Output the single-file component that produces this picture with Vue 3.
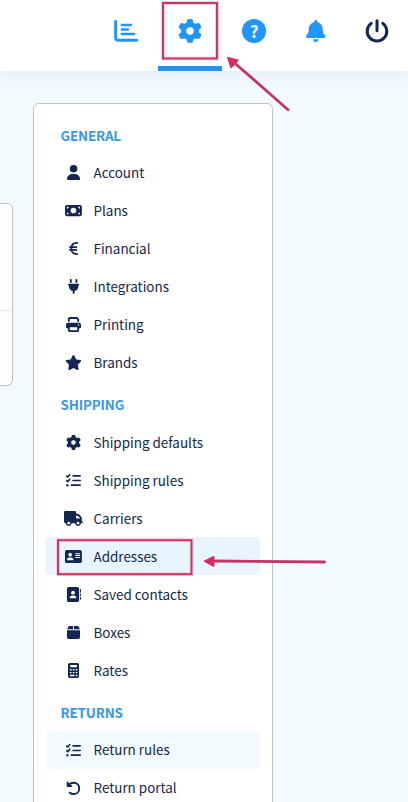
<script setup>
const gear =
  'M495.9 166.6c3.2 8.7 .5 18.4-6.4 24.6l-43.3 39.4c1.1 8.3 1.7 16.8 1.7 25.4s-.6 17.1-1.7 25.4l43.3 39.4c6.9 6.2 9.6 15.9 6.4 24.6c-4.4 11.9-9.7 23.3-15.8 34.3l-4.7 8.1c-6.6 11-14 21.4-22.1 31.2c-5.9 7.2-15.7 9.6-24.5 6.8l-55.7-17.7c-13.4 10.3-28.2 18.9-44 25.4l-12.5 57.1c-2 9.1-9 16.3-18.2 17.8c-13.8 2.3-28 3.5-42.5 3.5s-28.7-1.2-42.5-3.5c-9.2-1.5-16.2-8.7-18.2-17.8l-12.5-57.1c-15.8-6.5-30.6-15.1-44-25.4L83.1 425.9c-8.8 2.8-18.6 .3-24.5-6.8c-8.1-9.8-15.5-20.2-22.1-31.2l-4.7-8.1c-6.1-11-11.4-22.4-15.8-34.3c-3.2-8.7-.5-18.4 6.4-24.6l43.3-39.4C64.6 273.1 64 264.6 64 256s.6-17.1 1.7-25.4L22.4 191.2c-6.9-6.2-9.6-15.9-6.4-24.6c4.4-11.9 9.7-23.3 15.8-34.3l4.7-8.1c6.6-11 14-21.4 22.1-31.2c5.9-7.2 15.7-9.6 24.5-6.8l55.7 17.7c13.4-10.3 28.2-18.9 44-25.4l12.5-57.1c2-9.1 9-16.3 18.2-17.8C227.3 1.2 241.5 0 256 0s28.7 1.2 42.5 3.5c9.2 1.5 16.2 8.7 18.2 17.8l12.5 57.1c15.8 6.5 30.6 15.1 44 25.4l55.7-17.7c8.8-2.8 18.6-.3 24.5 6.8c8.1 9.8 15.5 20.2 22.1 31.2l4.7 8.1c6.1 11 11.4 22.4 15.8 34.3zM256 336a80 80 0 1 0 0-160 80 80 0 1 0 0 160z'

// w: view box width (height is always 512); f: filled path; s: stroked path; sw: stroke width
const icons = {
  gear: { w: 512, f: gear },
  user: { w: 448, f: 'M224 256A128 128 0 1 0 224 0a128 128 0 1 0 0 256zm-45.7 48C79.8 304 0 383.8 0 482.3C0 498.7 13.3 512 29.7 512H418.3c16.4 0 29.7-13.3 29.7-29.7C448 383.8 368.2 304 269.7 304H178.3z' },
  money: { w: 576, f: 'M64 64C28.7 64 0 92.7 0 128V384c0 35.3 28.7 64 64 64H512c35.3 0 64-28.7 64-64V128c0-35.3-28.7-64-64-64H64zm64 320H64V320c35.3 0 64 28.7 64 64zM64 192V128h64c0 35.3-28.7 64-64 64zM448 384c0-35.3 28.7-64 64-64v64H448zm64-192c-35.3 0-64-28.7-64-64h64v64zM288 160a96 96 0 1 1 0 192 96 96 0 1 1 0-192z' },
  euro: { w: 320, f: '', s: 'M292 66H264C150 66 82 145 82 256S150 446 264 446H292M32 208H252M32 304H252', sw: 62 },
  plug: { w: 384, f: 'M96 0C78.300 0 64 14.300 64 32v96h64V32c0-17.700-14.300-32-32-32zM288 0c-17.700 0-32 14.300-32 32v96h64V32c0-17.700-14.300-32-32-32zM32 160c-17.700 0-32 14.300-32 32s14.300 32 32 32v32c0 77.400 55 142 128 156.800V480c0 17.700 14.300 32 32 32s32-14.300 32-32V412.800C297 398 352 333.400 352 256V224c17.700 0 32-14.300 32-32s-14.300-32-32-32H32z' },
  print: { w: 512, f: 'M128 0C92.700 0 64 28.700 64 64v96h64V64H354.700L384 93.300V160h64V93.300c0-17-6.700-33.300-18.700-45.300L400 18.700C388 6.700 371.700 0 354.700 0H128zM384 352v96H128V352H384zm64 32h32c17.700 0 32-14.300 32-32V256c0-35.300-28.700-64-64-64H64c-35.300 0-64 28.700-64 64v96c0 17.700 14.300 32 32 32H64v64c0 35.300 28.700 64 64 64H384c35.300 0 64-28.700 64-64V384zM432 248a24 24 0 1 1 0 48 24 24 0 1 1 0-48z' },
  star: { w: 576, f: 'M316.900 18C311.600 7 300.400 0 288.100 0s-23.400 7-28.800 18L195 150.300 51.400 171.500c-12 1.800-22 10.200-25.700 21.700s-.7 24.200 7.900 32.700L137.800 329 113.200 474.700c-2 12 3 24.200 12.900 31.300s23 8 33.800 2.300l128.300-68.500 128.300 68.500c10.800 5.700 23.900 4.900 33.800-2.300s14.900-19.300 12.900-31.300L438.500 329 542.700 225.900c8.600-8.500 11.700-21.200 7.900-32.700s-13.700-19.900-25.700-21.700L381.200 150.300 316.900 18z' },
  rules: { w: 512, f: 'M6 416a42 42 0 1 0 84 0a42 42 0 1 0-84 0z', s: 'M24 104L56 138 124 58M24 264L56 298 124 218M240 96H484M240 256H484M184 416H484', sw: 56 },
  truck: { w: 640, f: 'M48 0C21.500 0 0 21.500 0 48V368c0 26.500 21.500 48 48 48H64c0 53 43 96 96 96s96-43 96-96H384c0 53 43 96 96 96s96-43 96-96h32c17.700 0 32-14.300 32-32s-14.300-32-32-32V237.300c0-17-6.700-33.300-18.700-45.300L512 114.700c-12-12-28.300-18.700-45.300-18.700H416V48c0-26.500-21.500-48-48-48H48zM416 160h50.700L544 237.300V256H416V160zM112 416a48 48 0 1 1 96 0 48 48 0 1 1 -96 0zm368-48a48 48 0 1 1 0 96 48 48 0 1 1 0-96z' },
  card: { w: 576, f: 'M64 32C28.700 32 0 60.700 0 96V416c0 35.300 28.700 64 64 64H512c35.300 0 64-28.700 64-64V96c0-35.300-28.700-64-64-64H64zm80 256h64c44.200 0 80 35.800 80 80c0 8.800-7.200 16-16 16H80c-8.800 0-16-7.200-16-16c0-44.200 35.800-80 80-80zm-32-96a64 64 0 1 1 128 0 64 64 0 1 1-128 0zM352 144H512V176H352zM352 208H512V240H352zM352 272H512V304H352z' },
  contacts: { w: 512, f: 'M96 0C60.700 0 32 28.700 32 64V448c0 35.300 28.700 64 64 64H384c35.300 0 64-28.700 64-64V64c0-35.300-28.700-64-64-64H96zM208 288h64c44.200 0 80 35.800 80 80c0 8.800-7.200 16-16 16H144c-8.800 0-16-7.200-16-16c0-44.200 35.800-80 80-80zm-32-96a64 64 0 1 1 128 0 64 64 0 1 1-128 0zM480 64h16a16 16 0 0 1 16 16v96a16 16 0 0 1-16 16h-16zM480 224h16a16 16 0 0 1 16 16v48a16 16 0 0 1-16 16h-16zM480 336h16a16 16 0 0 1 16 16v64a16 16 0 0 1-16 16h-16z' },
  box: { w: 448, f: 'M90 32C72 32 55 42 47 59L5 144H208V32H90zM240 32V144H443L401 59C393 42 376 32 358 32H240zM0 176V416C0 451 29 480 64 480H384C419 480 448 451 448 416V176H0z' },
  calc: { w: 384, f: 'M64 0C28.700 0 0 28.700 0 64V448c0 35.300 28.700 64 64 64H320c35.300 0 64-28.700 64-64V64c0-35.300-28.700-64-64-64H64zM80 64H304V144H80zM64 208H120V256H64zM164 208H220V256H164zM264 208H320V256H264zM64 304H120V352H64zM164 304H220V352H164zM264 304H320V352H264zM64 400H220V448H64zM264 400H320V448H264z' },
  undo: { w: 512, f: '', s: 'M58 54V176H184M66 172C110 94 190 62 262 62C374 62 450 145 450 252S374 446 262 446C210 446 164 430 130 400', sw: 66 }
}

const groups = [
  { title: 'General', items: [['user', 'Account'], ['money', 'Plans'], ['euro', 'Financial'], ['plug', 'Integrations'], ['print', 'Printing'], ['star', 'Brands']] },
  { title: 'Shipping', items: [['gear', 'Shipping defaults'], ['rules', 'Shipping rules'], ['truck', 'Carriers'], ['card', 'Addresses', 'active'], ['contacts', 'Saved contacts'], ['box', 'Boxes'], ['calc', 'Rates']] },
  { title: 'Returns', items: [['rules', 'Return rules', 'hover'], ['undo', 'Return portal']] }
]
</script>

<template>
  <div class="page">
    <header class="topbar">
      <a class="tab">
        <svg width="26" height="26" viewBox="0 0 26 26" fill="none" stroke="currentColor" stroke-linecap="round" stroke-linejoin="round">
          <path d="M2.600 3.500V19.700Q2.600 22.200 5.100 22.200H23.800" stroke-width="2.900" />
          <path d="M8.900 7H17.800M8.900 11.500H14.800M8.900 16H20.900" stroke-width="2.600" />
        </svg>
      </a>
      <a class="tab current">
        <svg width="24" height="24" viewBox="0 0 512 512" fill="currentColor"><path :d="gear" /></svg>
      </a>
      <a class="tab">
        <span class="help">?</span>
      </a>
      <a class="tab bell">
        <svg width="19.500" height="22" viewBox="0 0 448 512" fill="currentColor" preserveAspectRatio="none">
          <path d="M224 0c-17.700 0-32 14.300-32 32V51.200C119 66 64 130.600 64 208v18.800c0 47-17.300 92.400-48.500 127.600l-7.400 8.300c-8.400 9.400-10.400 22.900-5.300 34.400S19.400 416 32 416H416c12.600 0 24-7.400 29.200-18.900s3.100-25-5.300-34.400l-7.400-8.300C401.300 319.200 384 273.900 384 226.800V208c0-77.400-55-142-128-156.800V32c0-17.700-14.300-32-32-32zm45.300 493.300c12-12 18.700-28.300 18.700-45.300H160c0 17 6.700 33.300 18.700 45.300s28.300 18.700 45.300 18.700s33.300-6.700 45.300-18.700z" />
        </svg>
      </a>
      <a class="tab power">
        <svg width="24" height="24" viewBox="0 0 24 24" fill="none" stroke="currentColor" stroke-width="3" stroke-linecap="round">
          <path d="M12 1.700V11.700M6.200 4.400A9.800 9.800 0 1 0 17.800 4.400" />
        </svg>
      </a>
    </header>

    <main class="content">
      <section class="panel"><div class="panel-top"></div></section>

      <nav class="menu">
        <section v-for="g in groups" :key="g.title" class="group">
          <h2>{{ g.title }}</h2>
          <a v-for="[icon, label, state] in g.items" :key="label" class="item" :class="state">
            <span class="icon">
              <svg :viewBox="`0 0 ${icons[icon].w} 512`" height="15" :width="icons[icon].w * 15 / 512">
                <path v-if="icons[icon].f" :d="icons[icon].f" fill="currentColor" fill-rule="evenodd" />
                <path v-if="icons[icon].s" :d="icons[icon].s" fill="none" stroke="currentColor" :stroke-width="icons[icon].sw" stroke-linecap="round" stroke-linejoin="round" />
              </svg>
            </span>
            <span>{{ label }}</span>
          </a>
        </section>
      </nav>
    </main>

    <svg class="marks" width="408" height="802" viewBox="0 0 408 802" fill="none">
      <g stroke="#f8cfdd" stroke-width="4">
        <rect x="163" y="3" width="54" height="55.500" />
        <rect x="58" y="540.200" width="133.500" height="34" />
      </g>
      <g stroke="#c33865" stroke-width="2">
        <rect x="163" y="3" width="54" height="55.500" />
        <rect x="58" y="540.200" width="133.500" height="34" />
      </g>
      <g stroke="#c53465" stroke-width="2.800" stroke-linecap="round">
        <path d="M288 109.700L234 62.500" />
        <path d="M324.500 562L212 561" />
      </g>
      <path d="M227.800 57.800L238 60.200L231.200 67.500Z" fill="#d92a64" stroke="#d92a64" stroke-width="1.500" stroke-linejoin="round" />
      <path d="M204.500 561.200L213.700 556.700V566Z" fill="#d92a64" stroke="#d92a64" stroke-width="1.500" stroke-linejoin="round" />
    </svg>
  </div>
</template>

<style>
body {
  margin: 0;
  overflow: hidden;
}
</style>

<style scoped>
.page {
  position: relative;
  height: 802px;
  overflow: hidden;
  background: #f3fafd;
  color: #122651;
  font-family: "Noto Sans CJK SC", "Noto Sans", sans-serif;
  display: flex;
  flex-direction: column;
}
.topbar {
  flex: none;
  height: 71px;
  display: flex;
  justify-content: flex-end;
  background: #fff;
  box-shadow: 0 2px 14px #dfe9f7;
  color: #2095fa;
}
.tab {
  width: 64px;
  box-sizing: border-box;
  display: flex;
  align-items: center;
  justify-content: center;
  padding-bottom: 4px;
  border-bottom: 5px solid transparent;
}
.current {
  border-color: #2492ef;
}
.bell {
  width: 60px;
}
.power {
  width: 62px;
  color: #122651;
}
.help {
  width: 24px;
  height: 24px;
  border-radius: 50%;
  background: #2095fa;
  color: #fff;
  font-size: 17px;
  font-weight: 700;
  line-height: 23px;
  text-align: center;
}
.content {
  display: flex;
  align-items: flex-start;
  gap: 20px;
  padding-top: 32px;
}
.panel {
  box-sizing: border-box;
  width: 13px;
  height: 183px;
  margin-top: 100px;
  background: #fff;
  border: 1px solid #bfc2ca;
  border-left: 0;
  border-radius: 0 6px 6px 0;
}
.panel-top {
  height: 106px;
  border-bottom: 1px solid #e8e5ee;
}
.menu {
  box-sizing: border-box;
  width: 240px;
  height: 730px;
  padding: 8px 12px;
  background: #fff;
  border: 1px solid #bfc2ca;
  border-radius: 6px;
}
.group h2 {
  margin: 0;
  height: 42px;
  box-sizing: border-box;
  padding: 3px 0 0 14.500px;
  font-size: 13.400px;
  letter-spacing: -0.15px;
  line-height: 40px;
  font-weight: 700;
  text-transform: uppercase;
  color: #3797e8;
}
.group:first-child h2 {
  height: 41px;
}
.item {
  height: 38px;
  display: flex;
  align-items: center;
  border-radius: 5px;
  font-size: 13.450px;
  line-height: 38px;
  white-space: nowrap;
}
.group:last-child .item {
  line-height: 36px;
  align-items: flex-start;
}
.group:last-child .icon {
  margin-top: 11.500px;
}
.active {
  background: #e8f5ff;
}
.hover {
  background: #f3fafe;
}
.icon {
  width: 20px;
  margin: 1px 10px 0 17.500px;
  display: flex;
  justify-content: center;
}
.marks {
  position: absolute;
  left: 0;
  top: 0;
  pointer-events: none;
}
</style>
